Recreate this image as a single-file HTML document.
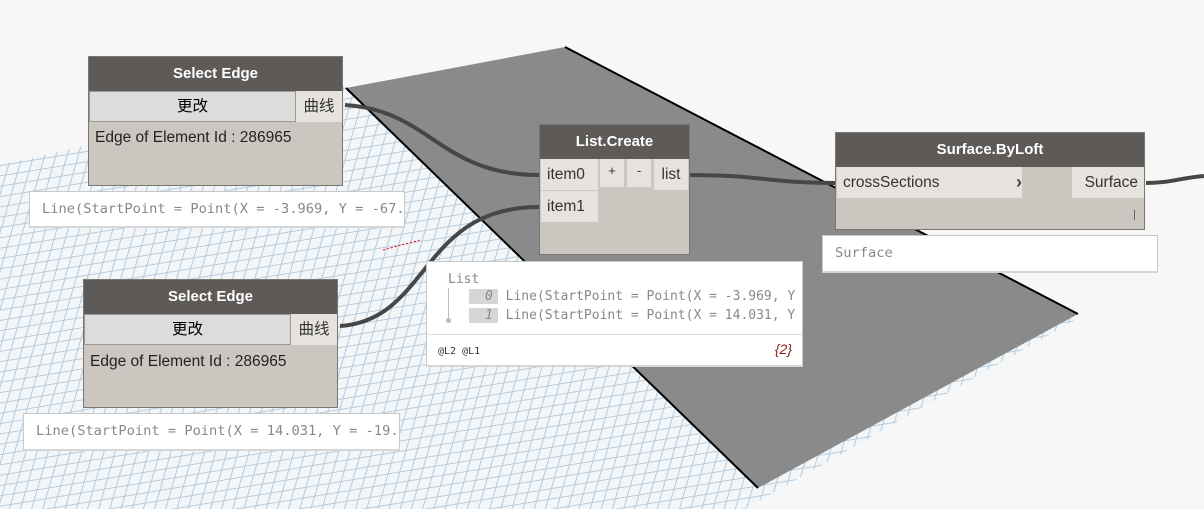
<!DOCTYPE html>
<html><head><meta charset="utf-8"><style>
body{margin:0;width:1204px;height:509px;overflow:hidden;background:#f7f7f7;font-family:"Liberation Sans","Noto Sans CJK SC",sans-serif;position:relative}
.a{position:absolute;box-sizing:border-box}
.node{background:#cbc6bf;border:1px solid #7a7670}
.hd{background:#5d5a58;color:#fff;font-weight:bold;font-size:15px;text-align:center}
.port{background:#e6e3de;color:#333;font-size:15.5px}
.pv{background:#fff;border:1px solid #c8c8c8;border-bottom:2px solid #d6d6d6;font-family:"DejaVu Sans Mono","Liberation Mono",monospace;font-size:13.7px;color:#888;white-space:nowrap;overflow:hidden}
</style></head><body>
<svg class="a" style="left:0;top:0" width="1204" height="509">
<defs><pattern id="g" width="11" height="11" patternUnits="userSpaceOnUse" patternTransform="skewX(-25) rotate(-10)"><rect width="11" height="11" fill="#f3f6f8"/><path d="M0 0.5H11M0.5 0V11" stroke="#b3c8d9" stroke-width="1"/></pattern></defs>
<polygon points="0,165 346,86 1082,316 745,509 0,509" fill="url(#g)"/>
<polygon points="346,88 565,47 1078,314 758,488" fill="#8a8a8a"/>
<polyline points="346,88 758,488" stroke="#000" stroke-width="2" fill="none"/>
<polyline points="565,47 1078,314" stroke="#000" stroke-width="2" fill="none"/>
<path d="M383 250 L420 240" stroke="#e00" stroke-dasharray="2 2"/>
<g stroke="#474747" stroke-width="4" fill="none">
<path d="M345 105 C430 110 440 175 539 175"/>
<path d="M340 326 C430 320 420 207 539 207"/>
<path d="M690 175 C760 175 770 183 835 183"/>
<path d="M1146 183 C1170 183 1180 178 1204 176"/>
</g>
</svg>

<div class="a node" style="top:56px;left:88px;width:255px;height:130px">
<div class="hd" style="height:34px;line-height:34px">Select Edge</div>
<div class="a" style="left:0;top:34px;width:207px;height:31px;background:#dcdcdc;border:1px solid #999;text-align:center;line-height:29px;font-size:15.5px">更改</div>
<div class="a port" style="left:207px;top:34px;width:46px;height:31px;line-height:31px;text-align:center">曲线</div>
<div class="a" style="left:6px;top:72px;font-size:15.5px;color:#222">Edge of Element Id : 286965</div>
</div>
<div class="a pv" style="left:29px;top:191px;width:376px;height:37px;line-height:34px;padding-left:12px">Line(StartPoint = Point(X = -3.969, Y = -67.</div>

<div class="a node" style="left:83px;top:279px;width:255px;height:129px">
<div class="hd" style="height:34px;line-height:34px">Select Edge</div>
<div class="a" style="left:0;top:34px;width:207px;height:31px;background:#dcdcdc;border:1px solid #999;text-align:center;line-height:29px;font-size:15.5px">更改</div>
<div class="a port" style="left:207px;top:34px;width:46px;height:31px;line-height:31px;text-align:center">曲线</div>
<div class="a" style="left:6px;top:73px;font-size:15.5px;color:#222">Edge of Element Id : 286965</div>
</div>
<div class="a pv" style="left:23px;top:413px;width:377px;height:38px;line-height:35px;padding-left:12px">Line(StartPoint = Point(X = 14.031, Y = -19.</div>

<div class="a node" style="left:539px;top:124px;width:151px;height:131px">
<div class="hd" style="height:34px;line-height:34px">List.Create</div>
<div class="a port" style="left:1px;top:34px;width:57px;height:31px;line-height:31px;padding-left:6px">item0</div>
<div class="a port" style="left:1px;top:66px;width:57px;height:31px;line-height:31px;padding-left:6px">item1</div>
<div class="a port" style="left:60px;top:34px;width:24px;height:28px;text-align:center;line-height:24px;font-size:13px">+</div>
<div class="a port" style="left:87px;top:34px;width:24px;height:28px;text-align:center;line-height:24px;font-size:13px">-</div>
<div class="a port" style="left:114px;top:34px;width:34px;height:31px;line-height:31px;text-align:center">list</div>
</div>
<div class="a pv" style="left:426px;top:261px;width:377px;height:106px;font-size:13px;line-height:19px">
<div style="position:absolute;left:21px;top:8px">List</div>
<div style="position:absolute;left:21px;top:26px;width:1px;height:32px;background:#bbb"></div>
<div style="position:absolute;left:19px;top:56px;width:5px;height:5px;border-radius:50%;background:#bbb"></div>
<div style="position:absolute;left:42px;top:25px"><span style="background:#d6d6d6;font-style:italic;padding:0 5px 0 16px">0</span> Line(StartPoint = Point(X = -3.969, Y</div>
<div style="position:absolute;left:42px;top:44px"><span style="background:#d6d6d6;font-style:italic;padding:0 5px 0 16px">1</span> Line(StartPoint = Point(X = 14.031, Y</div>
<div style="position:absolute;left:0;top:72px;width:100%;border-top:1px solid #ddd"></div>
<div style="position:absolute;left:11px;top:80px;font-size:10px;color:#333">@L2 @L1</div>
<div style="position:absolute;right:10px;top:78px;font-family:'Liberation Sans';font-style:italic;font-size:14px;color:#8b1a1a">{2}</div>
</div>

<div class="a node" style="left:835px;top:132px;width:310px;height:98px">
<div class="hd" style="height:34px;line-height:34px">Surface.ByLoft</div>
<div class="a port" style="left:1px;top:34px;width:185px;height:31px;line-height:31px;padding-left:6px">crossSections<span style="position:absolute;right:0;font-weight:bold;font-size:18px;color:#444">›</span></div>
<div class="a port" style="left:236px;top:34px;width:72px;height:31px;line-height:31px;text-align:right;padding-right:6px">Surface</div>
<div class="a" style="left:298px;top:77px;width:1px;height:10px;background:#666"></div>
</div>
<div class="a pv" style="left:822px;top:235px;width:336px;height:38px;line-height:34px;padding-left:12px">Surface</div>
</body></html>
